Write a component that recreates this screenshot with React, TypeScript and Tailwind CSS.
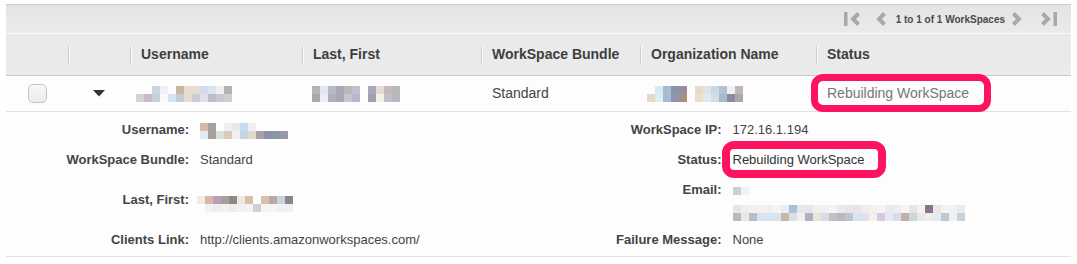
import React from "react";

type Grid = string[][];

function Mosaic({ cells }: { cells: Grid }) {
  return (
    <div className="flex flex-col">
      {cells.map((row, r) => (
        <div key={r} className="flex">
          {row.map((c, i) => (
            <div key={i} className="w-[8px] h-[8px]" style={{ background: c || "transparent" }} />
          ))}
        </div>
      ))}
    </div>
  );
}

const rowUser: Grid = [
  ["", "", "#ccd5e0", "#f0f0f6", "", "#c8b6a0", "#e8dcd0", "#e8dcd0", "#d0dcec", "#d8e4f0", "#f0f0f0", "#b4b4b4"],
  ["#dcd0d8", "#c8bcc4", "#c4d0dc", "#fafafa", "#d4e4f4", "#c4ccd8", "#e8dccc", "#c8ccd4", "#e4dce8", "#bcbccc", "#c8c8d0", "#c8d4c8"],
];
const rowName: Grid = [
  ["#b4b4b4", "#e0e8f0", "#b8b8c8", "#a8a8b8", "#b8b8b8", "#c0c0d0", "", "#a8a8b8", "#e4dcd4", "#c8b8b8", "#b8b8b8", ""],
  ["#a8a8a8", "#e8eef4", "#b0b0c0", "#a8a8b8", "#c4c8cc", "#b8b8c8", "", "#a0a0b0", "#f4f0ec", "#c0c0c8", "#b8b8c0", ""],
];
const rowOrg: Grid = [
  ["", "#dce8f0", "#a8bcd0", "#8c94a8", "#9c8c98", "", "#e8dcc8", "#e0e4e8", "#c8d8e8", "#b8c0d0", "#f0f0f0", "#c0b8b8"],
  ["#e8d8c8", "#e0ecf4", "#a8bcd0", "#8c98b0", "#a89080", "", "#ece0cc", "#e4e8ec", "#d0dce8", "#a8b8cc", "#8c8c9c", "#b0a8a8"],
];
const detUser: Grid = [
  ["#d8b8a8", "#a8a0a0", "", "#f0f0f0", "#e8e8e8", "#c4dcf0", "#f0f0f4", "", "", "", ""],
  ["#e0ecf4", "#a8a0a0", "#d8e0d8", "#d8ccb8", "#f0f0f0", "#c4d4e0", "#e0d8c8", "#a8a0a8", "#9090a8", "#8898a8", "#9898a8"],
];
const detName: Grid = [
  ["#f0ece4", "#d8b8a0", "#b8a0b8", "#a8a098", "#888c88", "#f0e8dc", "#d8c0a8", "", "#dcc0a8", "#b8a8a8", "#c8d4dc", "#888888"],
  ["", "#f4f0f4", "#f0ecf0", "#f4f0f0", "#f0ecec", "#f4f0f0", "#f4f0f4", "#d0d0d0", "#f4f4f4", "#f8f4f8", "#f0f0f4", "#f0f0f8"],
];
const emailSmall: Grid = [["#c8d0dc", "#f0f2f6"]];
const emailLong: Grid = [
  ["#e8e4ec", "#f0ecf0", "#f4f0f0", "#f4f0ec", "#f0f0f0", "#f8f4f0", "#e8ecf4", "#a8c0d8", "#e8e4ec", "#e8e4ec", "#f4f0f0", "#f0f0f0", "#f4f4f4", "#ece8ec", "#e8e4e8", "#e8e4e8", "#f0ecec", "#f4f0ec", "#f8f4f4", "#ece8ec", "#f0ecf0", "#f4f4f4", "#e8e4e8", "#f4f0f4", "#8c7090", "#e8e8e8", "#f4f4f4", "#f0f0f0", "#e8ecf0"],
  ["#c0b8b8", "#e8e8e8", "#b8bcc8", "#d8e4f0", "#d8e4f0", "#d8e4f0", "#c8b8a8", "#d8e0ec", "#f0f0f0", "#b0b0c0", "#e8e4dc", "#d8dce4", "#c0c0c0", "#b8b8c0", "#c0c4cc", "#d8e4f0", "#e4e0e8", "#f0f0f0", "#d4c8e4", "#e8e8f0", "#d8dce8", "#c0b0a8", "#d0d4d8", "#e8e8e8", "#f0ece8", "#e4ecf0", "#c0c8d0", "#f0f0f0", "#c8d0d8"],
];

function Chev({ dir, bar }: { dir: "l" | "r"; bar?: boolean }) {
  const w = bar ? 16 : 11;
  return (
    <svg width={w} height="14" viewBox={`0 0 ${w} 14`}>
      {dir === "l" ? (
        <>
          {bar && <rect x="0" y="0" width="3.5" height="14" fill="#a9a9a9" />}
          <path d={`M${w - 1.5} 1.5 L${w - 7} 7 L${w - 1.5} 12.5`} stroke="#a9a9a9" strokeWidth="4" fill="none" strokeLinejoin="miter" />
        </>
      ) : (
        <>
          <path d={`M1.5 1.5 L7 7 L1.5 12.5`} stroke="#a9a9a9" strokeWidth="4" fill="none" strokeLinejoin="miter" />
          {bar && <rect x={w - 3.5} y="0" width="3.5" height="14" fill="#a9a9a9" />}
        </>
      )}
    </svg>
  );
}

function HeadCell({ w, label, sep = true }: { w: string; label?: string; sep?: boolean }) {
  return (
    <div className={`${w} relative flex items-center pl-[11px] shrink-0`}>
      {sep && <div className="absolute left-0 top-[12px] h-[18px] w-[1px] bg-[#cfcfcf] shadow-[1px_0_0_#fafafa]" />}
      {label && <span className="font-bold text-[14px] text-[#3e3e3e]">{label}</span>}
    </div>
  );
}

function Label({ children }: { children: React.ReactNode }) {
  return (
    <div className="w-[183px] shrink-0 text-right font-bold text-[13px] text-[#444]">{children}</div>
  );
}

export default function App() {
  return (
    <div className="w-[1077px] h-[264px] bg-white pt-[4px] px-[6px]" style={{ fontFamily: '"Liberation Sans", Arial, sans-serif' }}>
      <div className="border-t border-[#cdcdcd]">
        {/* pagination bar */}
        <div className="h-[29px] bg-gradient-to-b from-[#e4e4e4] to-[#ebebeb] border-b border-[#f8f8f8] flex items-center justify-end pr-[14px]">
          <div className="flex items-center">
            <Chev dir="l" bar />
            <div className="w-[15px]" />
            <Chev dir="l" />
            <span className="ml-[10px] mr-[7px] text-[10px] font-bold text-[#4a4a4a]">1 to 1 of 1 WorkSpaces</span>
            <Chev dir="r" />
            <div className="w-[18px]" />
            <Chev dir="r" bar />
          </div>
        </div>
        {/* header */}
        <div className="h-[42px] bg-gradient-to-b from-[#e9e9e9] to-[#ebebeb] border-b border-[#c9c9c9] flex">
          <HeadCell w="w-[62px]" sep={false} />
          <HeadCell w="w-[62px]" />
          <HeadCell w="w-[172px]" label="Username" />
          <HeadCell w="w-[179px]" label="Last, First" />
          <HeadCell w="w-[159px]" label="WorkSpace Bundle" />
          <HeadCell w="w-[176px]" label="Organization Name" />
          <HeadCell w="flex-1" label="Status" />
        </div>
        {/* data row */}
        <div className="h-[36px] bg-[#fdfdfd] border-b border-[#e1e1e1] flex items-center">
          <div className="w-[62px] shrink-0 flex justify-center">
            <div className="w-[19px] h-[19px] rounded-[5px] border border-[#c4c4c4] bg-gradient-to-b from-[#f8f8f8] to-[#ebebeb]" />
          </div>
          <div className="w-[62px] shrink-0 flex justify-center">
            <svg width="12" height="7" viewBox="0 0 12 7">
              <path d="M0 0 L12 0 L6 6.5 Z" fill="#333" />
            </svg>
          </div>
          <div className="w-[172px] shrink-0 pl-[6px] flex items-center pt-[1px]">
            <Mosaic cells={rowUser} />
          </div>
          <div className="w-[179px] shrink-0 pl-[10px] flex items-center pt-[1px]">
            <Mosaic cells={rowName} />
          </div>
          <div className="w-[159px] shrink-0 pl-[11px] text-[14px] text-[#444]">Standard</div>
          <div className="w-[176px] shrink-0 pl-[7px] flex items-center pt-[1px]">
            <Mosaic cells={rowOrg} />
          </div>
          <div className="flex-1 pl-[11px] text-[14px] text-[#777]">
            <span className="relative">
              Rebuilding WorkSpace
              <span className="absolute left-[-16px] top-[-11px] w-[180px] h-[38px] border-[7px] border-[#fe135e] rounded-[12px]" />
            </span>
          </div>
        </div>
        {/* details */}
        <div className="h-[145px] bg-[#fdfdfd] border-b border-[#e1e1e1] pt-[3px] grid grid-cols-2 text-[13px] text-[#444]">
          <div className="flex flex-col">
            <div className="h-[30px] flex items-center gap-[11px]">
              <Label>Username:</Label>
              <div className="mt-[2px]"><Mosaic cells={detUser} /></div>
            </div>
            <div className="h-[30px] flex items-center gap-[11px]">
              <Label>WorkSpace Bundle:</Label>
              <span>Standard</span>
            </div>
            <div className="h-[50px] flex items-center gap-[8px]">
              <Label>Last, First:</Label>
              <div className="mt-[8px]"><Mosaic cells={detName} /></div>
            </div>
            <div className="h-[30px] flex items-center gap-[11px]">
              <Label>Clients Link:</Label>
              <span>http://clients.amazonworkspaces.com/</span>
            </div>
          </div>
          <div className="flex flex-col">
            <div className="h-[30px] flex items-center gap-[11px]">
              <Label>WorkSpace IP:</Label>
              <span>172.16.1.194</span>
            </div>
            <div className="h-[30px] flex items-center gap-[11px]">
              <Label>Status:</Label>
              <span className="relative text-[#333]">
                Rebuilding WorkSpace
                <span className="absolute left-[-11px] top-[-9px] w-[164px] h-[37px] border-[8px] border-[#fe135e] rounded-[12px]" />
              </span>
            </div>
            <div className="h-[50px] flex items-start gap-[11px]">
              <div className="h-[30px] flex items-center"><Label>Email:</Label></div>
              <div className="flex flex-col">
                <div className="h-[30px] flex items-center pt-[1px]"><Mosaic cells={emailSmall} /></div>
                <Mosaic cells={emailLong} />
              </div>
            </div>
            <div className="h-[30px] flex items-center gap-[11px]">
              <Label>Failure Message:</Label>
              <span>None</span>
            </div>
          </div>
        </div>
      </div>
    </div>
  );
}
